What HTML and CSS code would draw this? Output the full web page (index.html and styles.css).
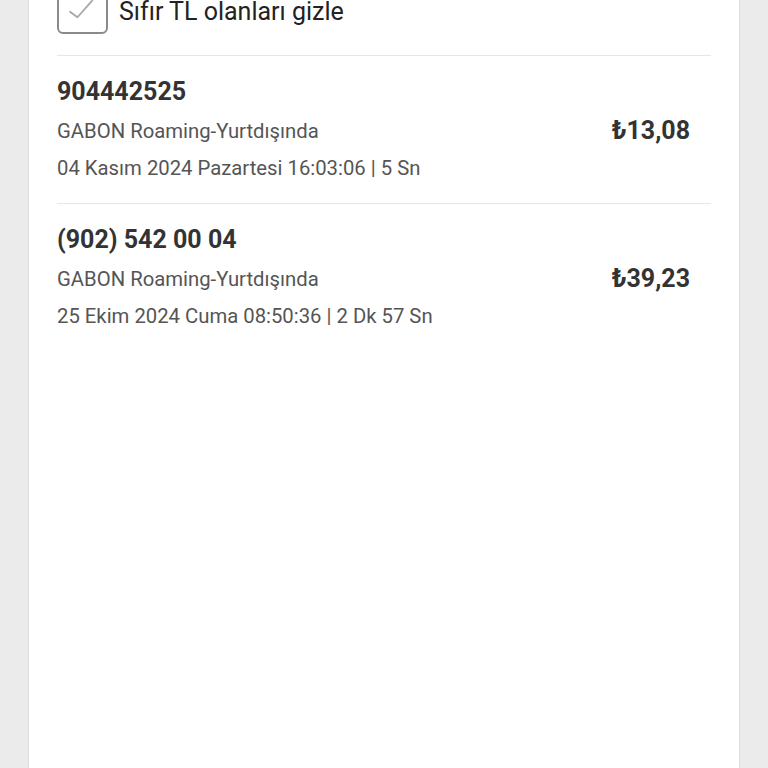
FILE: index.html
```
<!DOCTYPE html>
<html lang="tr">
<head>
    <meta charset="UTF-8">
    <meta name="viewport" content="width=device-width, initial-scale=1.0">
    <title>Arama Detayları</title>
    <link rel="stylesheet" href="styles.css">
</head>
<body>
    <div class="card">
        <label class="filter">
            <span class="checkbox">
                <svg viewBox="0 0 51 51" width="51" height="51" fill="none" stroke="#a8a8a8" stroke-width="2" stroke-linecap="round" stroke-linejoin="round">
                    <path d="M12 29l8 6 16-18"></path>
                </svg>
            </span>
            <span class="filter-label">Sıfır TL olanları gizle</span>
        </label>

        <ul class="calls">
            <li class="call">
                <div class="call-info">
                    <div class="call-number">904442525</div>
                    <div class="call-type">GABON Roaming-Yurtdışında</div>
                    <div class="call-date">04 Kasım 2024 Pazartesi 16:03:06 | 5 Sn</div>
                </div>
                <div class="call-price">₺13,08</div>
            </li>
            <li class="call">
                <div class="call-info">
                    <div class="call-number">(902) 542 00 04</div>
                    <div class="call-type">GABON Roaming-Yurtdışında</div>
                    <div class="call-date">25 Ekim 2024 Cuma 08:50:36 | 2 Dk 57 Sn</div>
                </div>
                <div class="call-price">₺39,23</div>
            </li>
        </ul>
    </div>
</body>
</html>
```

FILE: styles.css
```
:root {
    --background: #ebebeb;
    --card: #ffffff;
    --border: #dcdcdc;
    --divider: #e6e6e6;
    --text: #333333;
    --text-muted: #555555;
}

* {
    box-sizing: border-box;
}

html, body {
    height: 100%;
}

body {
    font-family: Roboto, "Noto Sans", sans-serif;
    background-color: var(--background);
    color: var(--text);
    margin: 0;
    padding: 0 28px 0 28px;
    overflow: hidden;
}

.card {
    display: flow-root;
    background-color: var(--card);
    border-left: 1px solid var(--border);
    border-right: 1px solid var(--border);
    min-height: 100%;
    width: 712px;
    padding: 0 28px;
}

.filter {
    display: flex;
    align-items: center;
    margin-top: -17px;
    padding-bottom: 21px;
    border-bottom: 1px solid var(--divider);
}

.checkbox {
    width: 51px;
    height: 51px;
    border: 2px solid #8a8a8a;
    border-radius: 6px;
    display: flex;
    align-items: center;
    justify-content: center;
    flex-shrink: 0;
}

.checkbox svg {
    width: 47px;
    height: 47px;
}

.filter-label {
    margin-left: 11px;
    padding-top: 7px;
    font-size: 25px;
    line-height: 30px;
    color: #222222;
}

.calls {
    list-style: none;
    margin: 0;
    padding: 0;
}

.call {
    display: flex;
    align-items: center;
    justify-content: space-between;
    padding: 21px 21px 16px 0;
    border-bottom: 1px solid var(--divider);
}

.call:last-child {
    border-bottom: none;
}

.call-number {
    font-size: 25px;
    font-weight: 700;
    line-height: 30px;
    color: var(--text);
}

.call-type {
    margin-top: 6px;
    font-size: 20.3px;
    line-height: 36px;
    color: var(--text-muted);
}

.call-date {
    font-size: 20.3px;
    line-height: 38px;
    color: var(--text-muted);
}

.call-price {
    margin-bottom: 4px;
    font-size: 25px;
    font-weight: 700;
    color: var(--text);
}
```
